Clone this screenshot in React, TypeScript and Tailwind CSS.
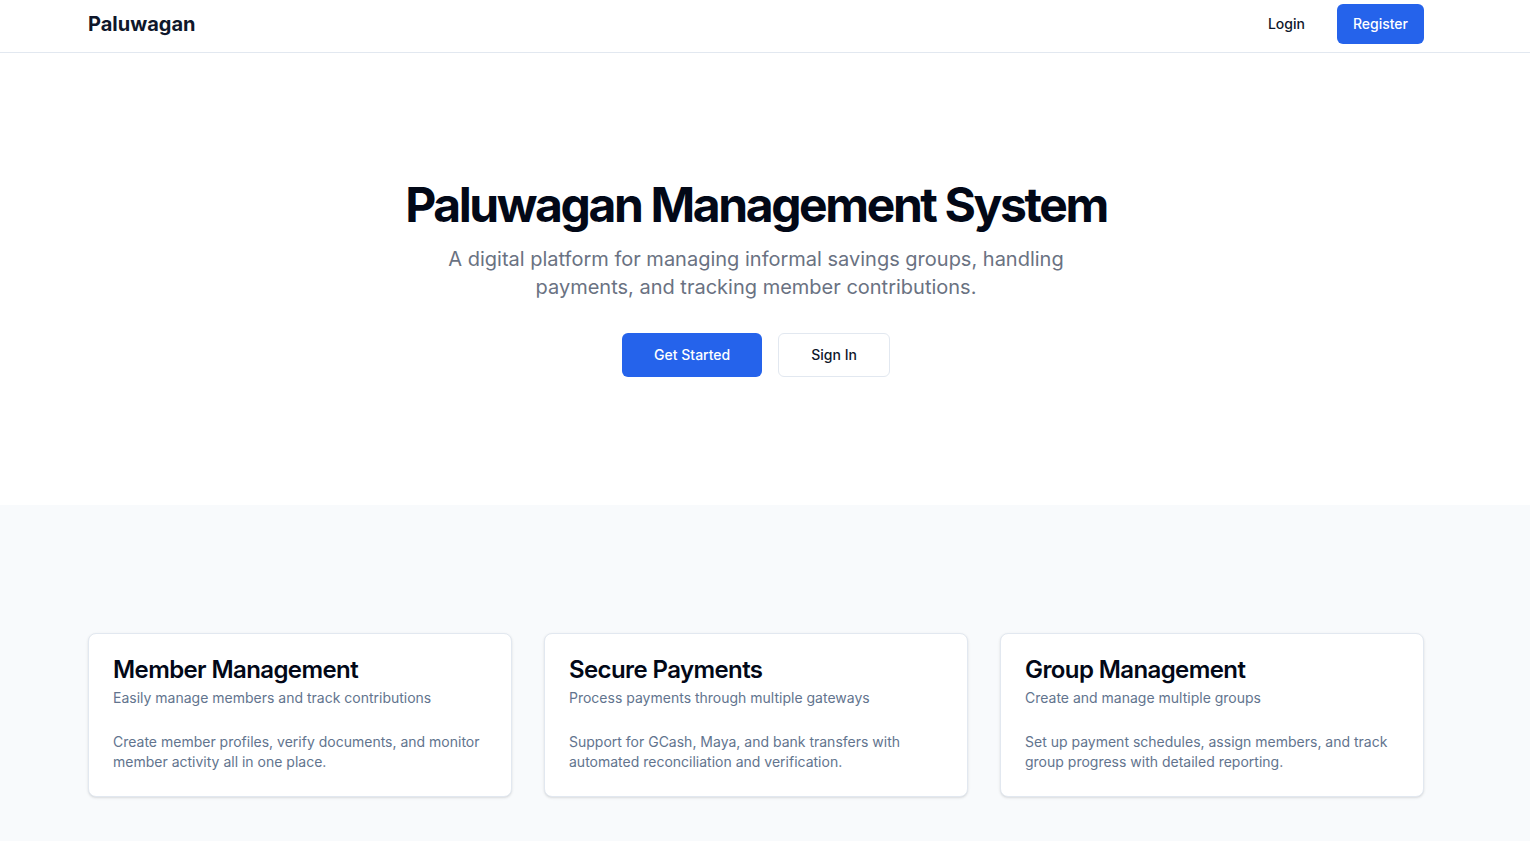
import React from 'react';

const features = [
  {
    title: 'Member Management',
    description: 'Easily manage members and track contributions',
    body: 'Create member profiles, verify documents, and monitor member activity all in one place.',
  },
  {
    title: 'Secure Payments',
    description: 'Process payments through multiple gateways',
    body: 'Support for GCash, Maya, and bank transfers with automated reconciliation and verification.',
  },
  {
    title: 'Group Management',
    description: 'Create and manage multiple groups',
    body: 'Set up payment schedules, assign members, and track group progress with detailed reporting.',
  },
];

const App: React.FC = () => {
  return (
    <div className="min-h-screen bg-white text-[#020817] font-['Inter',sans-serif]">
      <header className="border-b border-slate-200 pr-[18px]">
        <div className="mx-auto max-w-[1400px] px-8 h-[52px] flex items-start justify-between pt-1">
          <span className="text-xl font-bold leading-10 text-slate-900">Paluwagan</span>
          <nav className="flex items-center gap-4">
            <button className="h-10 px-4 rounded-md text-sm font-medium text-slate-900 hover:bg-slate-100">
              Login
            </button>
            <button className="h-10 px-4 rounded-md text-sm font-medium bg-[#2563eb] text-white">
              Register
            </button>
          </nav>
        </div>
      </header>

      <main>
        <section className="py-32 pr-[18px]">
          <div className="mx-auto max-w-[1400px] px-8 flex flex-col items-center text-center">
            <h1 className="text-5xl leading-none font-bold tracking-tighter">
              Paluwagan Management System
            </h1>
            <p className="mt-4 max-w-[700px] text-xl text-gray-500">
              A digital platform for managing informal savings groups, handling payments, and tracking member
              contributions.
            </p>
            <div className="mt-8 flex gap-4">
              <button className="h-11 px-8 rounded-md text-sm font-medium bg-[#2563eb] text-white">
                Get Started
              </button>
              <button className="h-11 px-8 rounded-md text-sm font-medium border border-slate-200 bg-white text-slate-900">
                Sign In
              </button>
            </div>
          </div>
        </section>

        <section className="bg-slate-50 py-32 pr-[18px]">
          <div className="mx-auto max-w-[1400px] px-8 grid grid-cols-3 gap-8">
            {features.map((f) => (
              <div key={f.title} className="rounded-lg border border-slate-200 bg-white shadow-sm">
                <div className="p-6 flex flex-col gap-1.5">
                  <h3 className="text-2xl font-semibold leading-none tracking-tight">{f.title}</h3>
                  <p className="text-sm text-slate-500">{f.description}</p>
                </div>
                <div className="px-6 pb-6">
                  <p className="text-sm text-slate-500">{f.body}</p>
                </div>
              </div>
            ))}
          </div>
        </section>
      </main>
    </div>
  );
};

export default App;
